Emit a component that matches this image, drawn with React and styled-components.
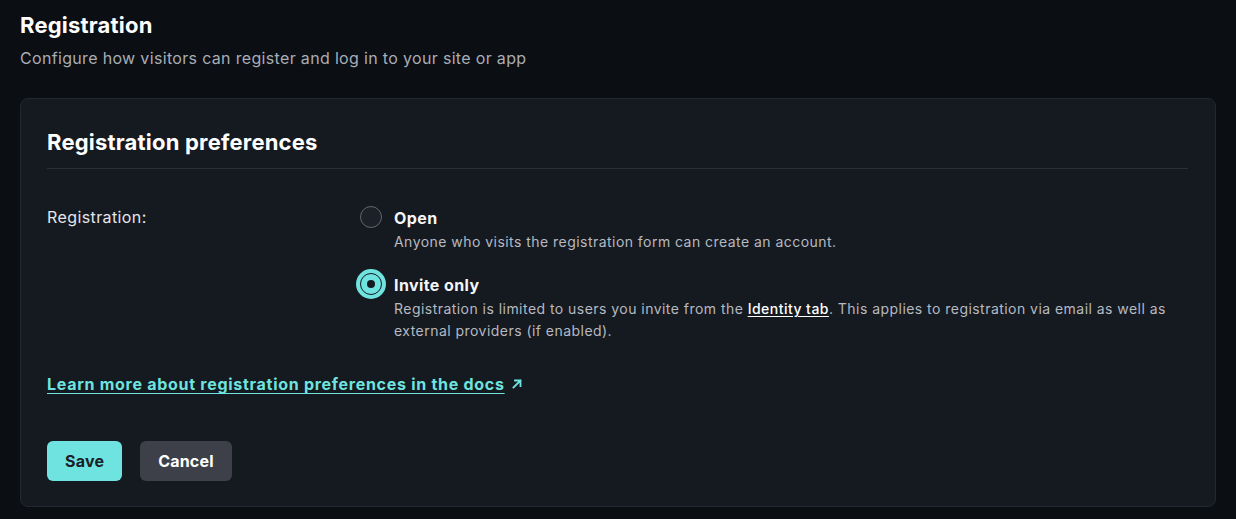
import styled, { createGlobalStyle } from "styled-components";

const GlobalStyle = createGlobalStyle`
  html, body {
    margin: 0;
    padding: 0;
    background: #0b0e13;
  }
  body {
    font-family: Inter, "Noto Sans", "Liberation Sans", sans-serif;
    color: #f2f3f5;
    -webkit-font-smoothing: antialiased;
  }
`;

const Page = styled.main`
  width: 1236px;
  height: 519px;
  box-sizing: border-box;
  padding: 11px 20px 0 20px;
  overflow: hidden;
`;

const PageTitle = styled.h1`
  margin: 0;
  font-size: 22px;
  line-height: 28px;
  font-weight: 700;
  color: #ffffff;
  letter-spacing: 0.2px;
`;

const PageSubtitle = styled.p`
  margin: 7px 0 0 0;
  font-size: 16px;
  line-height: 24px;
  color: #a9adb5;
  letter-spacing: 0.33px;
`;

const Card = styled.section`
  margin-top: 28px;
  height: 409px;
  box-sizing: border-box;
  background: #151920;
  border: 1px solid #23272f;
  border-radius: 8px;
  padding: 29px 27px 0 26px;
`;

const CardTitle = styled.h2`
  margin: 0;
  padding-bottom: 12px;
  border-bottom: 1px solid #2b2f37;
  font-size: 22px;
  line-height: 28px;
  font-weight: 700;
  color: #ffffff;
  letter-spacing: 0.2px;
`;

const FieldRow = styled.div`
  display: grid;
  grid-template-columns: 313px 1fr;
  margin-top: 36px;
`;

const FieldLabel = styled.div`
  font-size: 16px;
  line-height: 24px;
  color: #e4e6ea;
  letter-spacing: 0.4px;
`;

const Options = styled.div`
  display: flex;
  flex-direction: column;
  gap: 19px;
`;

const Option = styled.label`
  display: grid;
  grid-template-columns: 22px 1fr;
  column-gap: 12px;
  align-items: start;
`;

const Radio = styled.span`
  width: 22px;
  height: 22px;
  margin-top: 1px;
  box-sizing: border-box;
  border-radius: 50%;
  display: flex;
  align-items: center;
  justify-content: center;
  background: ${(p) => (p.checked ? "#6fe3df" : "#1c2028")};
  border: ${(p) => (p.checked ? "1.5px solid #151920" : "1.5px solid #62666e")};
  box-shadow: ${(p) => (p.checked ? "0 0 0 4px #6fe3df" : "none")};
`;

const Dot = styled.span`
  width: 8px;
  height: 8px;
  border-radius: 50%;
  background: #151920;
`;

const OptionText = styled.div`
  display: flex;
  flex-direction: column;
`;

const OptionTitle = styled.span`
  font-size: 16px;
  line-height: 26px;
  font-weight: 700;
  color: #f4f5f7;
  letter-spacing: 0.4px;
`;

const OptionDesc = styled.span`
  font-size: 14px;
  line-height: 22px;
  color: #b6bac1;
  letter-spacing: 0.46px;
`;

const InlineLink = styled.a`
  color: #ffffff;
  font-weight: 500;
  text-decoration: underline;
  text-underline-offset: 2px;
`;

const DocsLink = styled.a`
  display: inline-flex;
  align-items: center;
  gap: 6px;
  margin-top: 30px;
  font-size: 16px;
  line-height: 24px;
  font-weight: 700;
  color: #6fe3df;
  letter-spacing: 0.72px;
  text-decoration: underline;
  text-underline-offset: 3px;
`;

const Actions = styled.div`
  display: flex;
  gap: 18px;
  margin-top: 45px;
`;

const Button = styled.button`
  height: 40px;
  padding: 0 18px;
  border: none;
  border-radius: 6px;
  font-family: inherit;
  font-size: 16px;
  font-weight: 700;
  letter-spacing: 0.2px;
  cursor: pointer;
  background: ${(p) => (p.primary ? "#6fe3df" : "#3d4048")};
  color: ${(p) => (p.primary ? "#1a2128" : "#ffffff")};
`;

const ArrowIcon = () => (
  <svg width="12" height="12" viewBox="0 0 12 12" fill="none">
    <path
      d="M2.5 9.5L9.5 2.5M4 2.5H9.5V8"
      stroke="#6fe3df"
      strokeWidth="1.8"
      strokeLinecap="square"
    />
  </svg>
);

const App = () => {
  return (
    <>
      <GlobalStyle />
      <Page>
        <PageTitle>Registration</PageTitle>
        <PageSubtitle>
          Configure how visitors can register and log in to your site or app
        </PageSubtitle>
        <Card>
          <CardTitle>Registration preferences</CardTitle>
          <FieldRow>
            <FieldLabel>Registration:</FieldLabel>
            <Options>
              <Option>
                <Radio />
                <OptionText>
                  <OptionTitle>Open</OptionTitle>
                  <OptionDesc>
                    Anyone who visits the registration form can create an account.
                  </OptionDesc>
                </OptionText>
              </Option>
              <Option>
                <Radio checked>
                  <Dot />
                </Radio>
                <OptionText>
                  <OptionTitle>Invite only</OptionTitle>
                  <OptionDesc>
                    Registration is limited to users you invite from the{" "}
                    <InlineLink href="#">Identity tab</InlineLink>. This applies to
                    registration via email as well as external providers (if
                    enabled).
                  </OptionDesc>
                </OptionText>
              </Option>
            </Options>
          </FieldRow>
          <DocsLink href="#">
            Learn more about registration preferences in the docs
            <ArrowIcon />
          </DocsLink>
          <Actions>
            <Button primary>Save</Button>
            <Button>Cancel</Button>
          </Actions>
        </Card>
      </Page>
    </>
  );
};

export default App;
